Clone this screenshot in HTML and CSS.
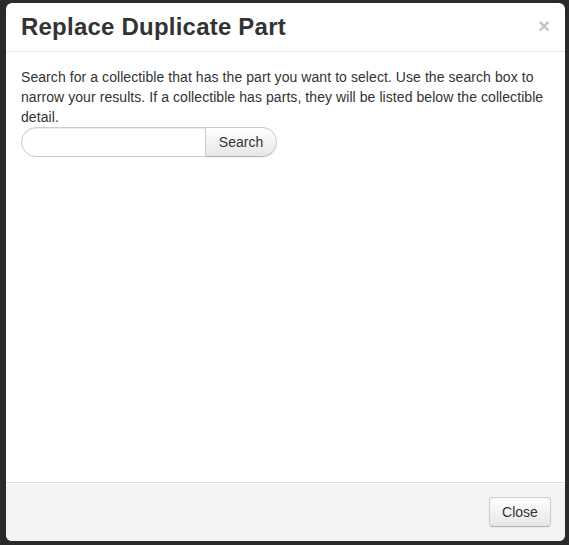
FILE: index.html
```html
<!DOCTYPE html>
<html>
<head>
<meta charset="utf-8">
<link rel="stylesheet" href="styles.css">
</head>
<body>
<div class="modal">
  <div class="modal-header">
    <h3 class="title">Replace Duplicate Part</h3>
    <span class="close">×</span>
  </div>
  <div class="modal-body">
    <p class="intro">Search for a collectible that has the part you want to select. Use the search box to narrow your results. If a collectible has parts, they will be listed below the collectible detail.</p>
    <div class="search">
      <input class="search-input" type="text">
      <button class="btn search-btn">Search</button>
    </div>
  </div>
  <div class="modal-footer">
    <button class="btn close-btn">Close</button>
  </div>
</div>
</body>
</html>
```

FILE: styles.css
```css
html, body {
  margin: 0;
  background: #2a2a2a;
}
body {
  padding: 3px 4px 4px 6px;
  font-family: "Liberation Sans", Arial, sans-serif;
  font-size: 14px;
  line-height: 20px;
  color: #333;
}
.modal {
  width: 559px;
  height: 538px;
  background: #fff;
  border-radius: 6px;
  display: flex;
  flex-direction: column;
  overflow: hidden;
}
.modal-header {
  display: flex;
  align-items: flex-start;
  justify-content: space-between;
  padding: 9px 15px 9px 15px;
  border-bottom: 1px solid #e5e5e5;
}
.title {
  margin: 0;
  font-size: 24px;
  line-height: 30px;
  font-weight: bold;
  letter-spacing: 0.22px;
  color: #333;
}
.close {
  font-size: 20px;
  font-weight: bold;
  line-height: 20px;
  color: #c4c4c4;
  margin-top: 4px;
  margin-right: 0;
}
.modal-body {
  flex: 1;
  padding: 15px;
}
.intro {
  margin: 0;
  letter-spacing: 0.07px;
}
.search {
  display: flex;
}
.search-input {
  box-sizing: border-box;
  width: 185px;
  height: 30px;
  margin: 0;
  border: 1px solid #ccc;
  border-radius: 15px 0 0 15px;
  box-shadow: inset 0 1px 1px rgba(0,0,0,0.075);
  padding: 4px 14px;
  font: inherit;
  outline: none;
}
.btn {
  box-sizing: border-box;
  height: 30px;
  margin: 0;
  padding: 4px 12px;
  font-family: "Liberation Sans", Arial, sans-serif;
  font-size: 14px;
  line-height: 20px;
  color: #333;
  background: linear-gradient(to bottom, #ffffff, #e6e6e6);
  border: 1px solid #ccc;
  border-bottom-color: #b3b3b3;
  box-shadow: inset 0 1px 0 rgba(255,255,255,0.2), 0 1px 2px rgba(0,0,0,0.05);
}
.search-btn {
  width: 71px;
  border-left: 0;
  border-radius: 0 15px 15px 0;
}
.modal-footer {
  display: flex;
  justify-content: flex-end;
  padding: 14px 14px 14px 15px;
  background: #f4f4f4;
  border-top: 1px solid #ddd;
  box-shadow: inset 0 1px 0 #fff;
}
.close-btn {
  width: 62px;
  border-radius: 4px;
}
```
